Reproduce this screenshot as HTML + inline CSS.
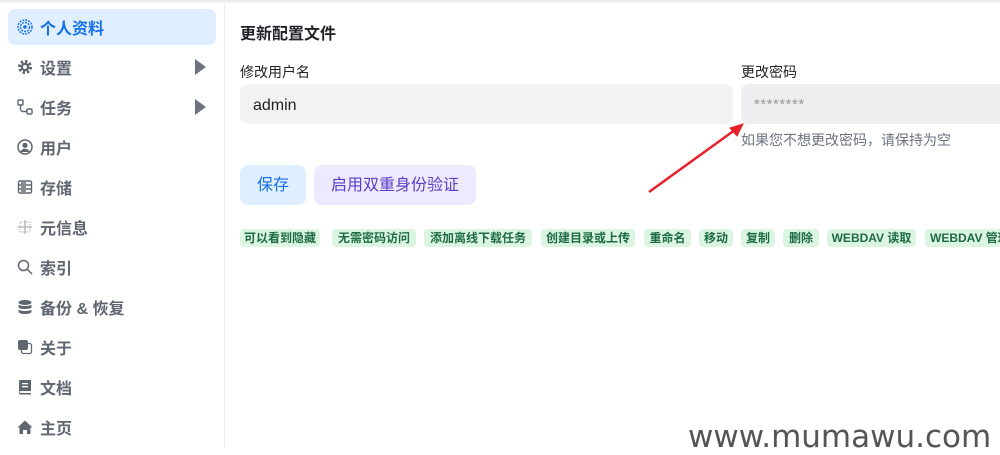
<!DOCTYPE html>
<html><head><meta charset="utf-8"><style>
*{box-sizing:border-box;margin:0;padding:0}
body{width:1000px;height:447px;overflow:hidden;background:#fff;font-family:"Liberation Sans","Noto Sans CJK SC",sans-serif;position:relative}
.topsh{position:absolute;left:0;top:0;width:1000px;height:4px;background:linear-gradient(#e6e6e6,#fff)}
.side{position:absolute;left:0;top:0;width:225px;height:447px;border-right:1px solid #eee}
.item{position:absolute;left:8px;width:208px;height:36px;display:flex;align-items:center;font-size:16px;font-weight:bold;color:#5f6670}
.item svg{position:absolute;left:9px;top:10px}
.item span{position:absolute;left:32px}
.item.act{background:#e0efff;border-radius:7px;color:#1570e8}
.tri{position:absolute;left:187px;top:10px;width:0;height:0;border-left:11px solid #6b7280;border-top:8px solid transparent;border-bottom:8px solid transparent}
.abs{position:absolute}
.inp{position:absolute;background:#f1f2f4;border-radius:8px;height:40px}
.tag{position:absolute;top:229px;height:18px;background:#dcf4e2;border-radius:4px;color:#1d6b45;font-size:12px;font-weight:bold;line-height:18px;text-align:center;white-space:nowrap}
</style></head><body>
<div class="topsh"></div>
<div class="side">
<div class="item act" style="top:9px"><svg width="16" height="16" viewBox="0 0 16 16"><circle cx="8" cy="8" r="7" fill="none" stroke="#1570e8" stroke-width="1.4" stroke-dasharray="2 1"/><circle cx="8" cy="8" r="4.5" fill="none" stroke="#1570e8" stroke-width="1.4" stroke-dasharray="2 1"/><circle cx="8" cy="8" r="1.8" fill="#1570e8"/></svg><span>个人资料</span></div>
<div class="item" style="top:49px"><svg width="16" height="16" viewBox="0 0 16 16"><circle cx="8" cy="8" r="5" fill="none" stroke="#5f6670" stroke-width="4" stroke-dasharray="2.2 1.7"/><circle cx="8" cy="8" r="4.2" fill="#5f6670"/><circle cx="8" cy="8" r="2" fill="#fff"/></svg><span>设置</span><div class="tri"></div></div>
<div class="item" style="top:89px"><svg width="16" height="16" viewBox="0 0 16 16" fill="none" stroke="#5f6670" stroke-width="1.4"><rect x="1" y="1" width="5" height="5" rx="1"/><rect x="10" y="10" width="5" height="5" rx="1"/><path d="M3.5 6v4a2.5 2.5 0 0 0 2.5 2.5h4"/></svg><span>任务</span><div class="tri"></div></div>
<div class="item" style="top:129px"><svg width="16" height="16" viewBox="0 0 16 16"><circle cx="8" cy="8" r="7" fill="none" stroke="#5f6670" stroke-width="1.5"/><circle cx="8" cy="6.3" r="2.6" fill="#5f6670"/><path d="M3.3 13c1-2.3 2.6-3.2 4.7-3.2s3.7.9 4.7 3.2" fill="#5f6670"/></svg><span>用户</span></div>
<div class="item" style="top:169px"><svg width="16" height="16" viewBox="0 0 16 16" fill="none" stroke="#5f6670" stroke-width="1.4"><rect x="1.5" y="2" width="13" height="12" rx="1.5"/><path d="M1.5 6h13M1.5 10h13M4 4h5M4 8h5M4 12h5"/></svg><span>存储</span></div>
<div class="item" style="top:209px"><svg width="16" height="16" viewBox="0 0 16 16" fill="#9aa0a8"><rect x="3" y="3" width="10" height="10" fill="none" stroke="#aaa" stroke-width="1" stroke-dasharray="1 1"/><rect x="7.5" y="1" width="1" height="14"/><rect x="1" y="7.5" width="14" height="1"/></svg><span>元信息</span></div>
<div class="item" style="top:249px"><svg width="16" height="16" viewBox="0 0 16 16" fill="none" stroke="#5f6670" stroke-width="1.5"><circle cx="6.5" cy="6.5" r="5"/><path d="M10 10l5 5"/></svg><span>索引</span></div>
<div class="item" style="top:289px"><svg width="16" height="16" viewBox="0 0 16 16" fill="#5f6670"><ellipse cx="8" cy="3.5" rx="6.5" ry="2.5"/><path d="M1.5 5.5c1 2 12 2 13 0v3c-1 2-12 2-13 0z"/><path d="M1.5 10.5c1 2 12 2 13 0v2c0 1.5-3 2.5-6.5 2.5s-6.5-1-6.5-2.5z"/></svg><span>备份 &amp; 恢复</span></div>
<div class="item" style="top:329px"><svg width="16" height="16" viewBox="0 0 16 16"><rect x="4.5" y="4.5" width="10" height="10" rx="2" fill="none" stroke="#5f6670" stroke-width="1.3"/><rect x="1" y="1" width="10" height="10" rx="2" fill="#5f6670"/></svg><span>关于</span></div>
<div class="item" style="top:369px"><svg width="16" height="16" viewBox="0 0 16 16" fill="#5f6670"><path d="M2 2.5A1.5 1.5 0 0 1 3.5 1h10.5v11H3.5a1 1 0 0 0 0 2H14v1.5H3.5A1.5 1.5 0 0 1 2 14z"/><rect x="5" y="4" width="6" height="1.3" fill="#fff"/><rect x="5" y="7" width="6" height="1.3" fill="#fff"/></svg><span>文档</span></div>
<div class="item" style="top:409px"><svg width="16" height="16" viewBox="0 0 16 16" fill="#5f6670"><path d="M8 1.5l7.5 7h-2v6.5h-3.5v-4h-4v4h-3.5v-6.5h-2z"/></svg><span>主页</span></div>
</div>

<div class="abs" style="left:240px;top:20px;font-size:16px;font-weight:bold;color:#1f2328">更新配置文件</div>
<div class="abs" style="left:240px;top:62px;font-size:14px;color:#222">修改用户名</div>
<div class="inp" style="left:240px;top:84px;width:493px"><span class="abs" style="left:13px;top:13px;font-size:16px;color:#222">admin</span></div>
<div class="abs" style="left:741px;top:62px;font-size:14px;color:#222">更改密码</div>
<div class="inp" style="left:741px;top:84px;width:270px;background:#eceef0"><span class="abs" style="left:13px;top:12px;font-size:15px;color:#999;letter-spacing:0.5px">********</span></div>
<div class="abs" style="left:741px;top:130px;font-size:14px;color:#6b7280">如果您不想更改密码，请保持为空</div>
<svg class="abs" style="left:640px;top:110px" width="120" height="90"><path d="M9 82L99 17" stroke="#e8202a" stroke-width="2.5"/><path d="M103 14L90 18L97 26z" fill="#e8202a" stroke="#e8202a" stroke-width="1"/></svg>
<div class="abs" style="left:240px;top:165px;width:66px;height:40px;background:#e0efff;border-radius:8px;color:#1570e8;font-size:16px;line-height:42px;text-align:center">保存</div>
<div class="abs" style="left:314px;top:165px;width:162px;height:40px;background:#ede9fe;border-radius:8px;color:#5b3fc4;font-size:16px;line-height:42px;text-align:center">启用双重身份验证</div>

<div class="tag" style="left:240px;width:80px">可以看到隐藏</div>
<div class="tag" style="left:332px;width:84px">无需密码访问</div>
<div class="tag" style="left:424px;width:108px">添加离线下载任务</div>
<div class="tag" style="left:541px;width:94px">创建目录或上传</div>
<div class="tag" style="left:644px;width:47px">重命名</div>
<div class="tag" style="left:699px;width:34px">移动</div>
<div class="tag" style="left:741px;width:34px">复制</div>
<div class="tag" style="left:783px;width:36px">删除</div>
<div class="tag" style="left:827px;width:89px">WEBDAV 读取</div>
<div class="tag" style="left:925px;width:90px;text-align:left;padding-left:5px">WEBDAV 管理</div>

<div class="abs" style="left:688px;top:419px;font-family:'DejaVu Sans',sans-serif;font-size:31px;color:#555;white-space:nowrap">www.mumawu.com</div>
</body></html>
